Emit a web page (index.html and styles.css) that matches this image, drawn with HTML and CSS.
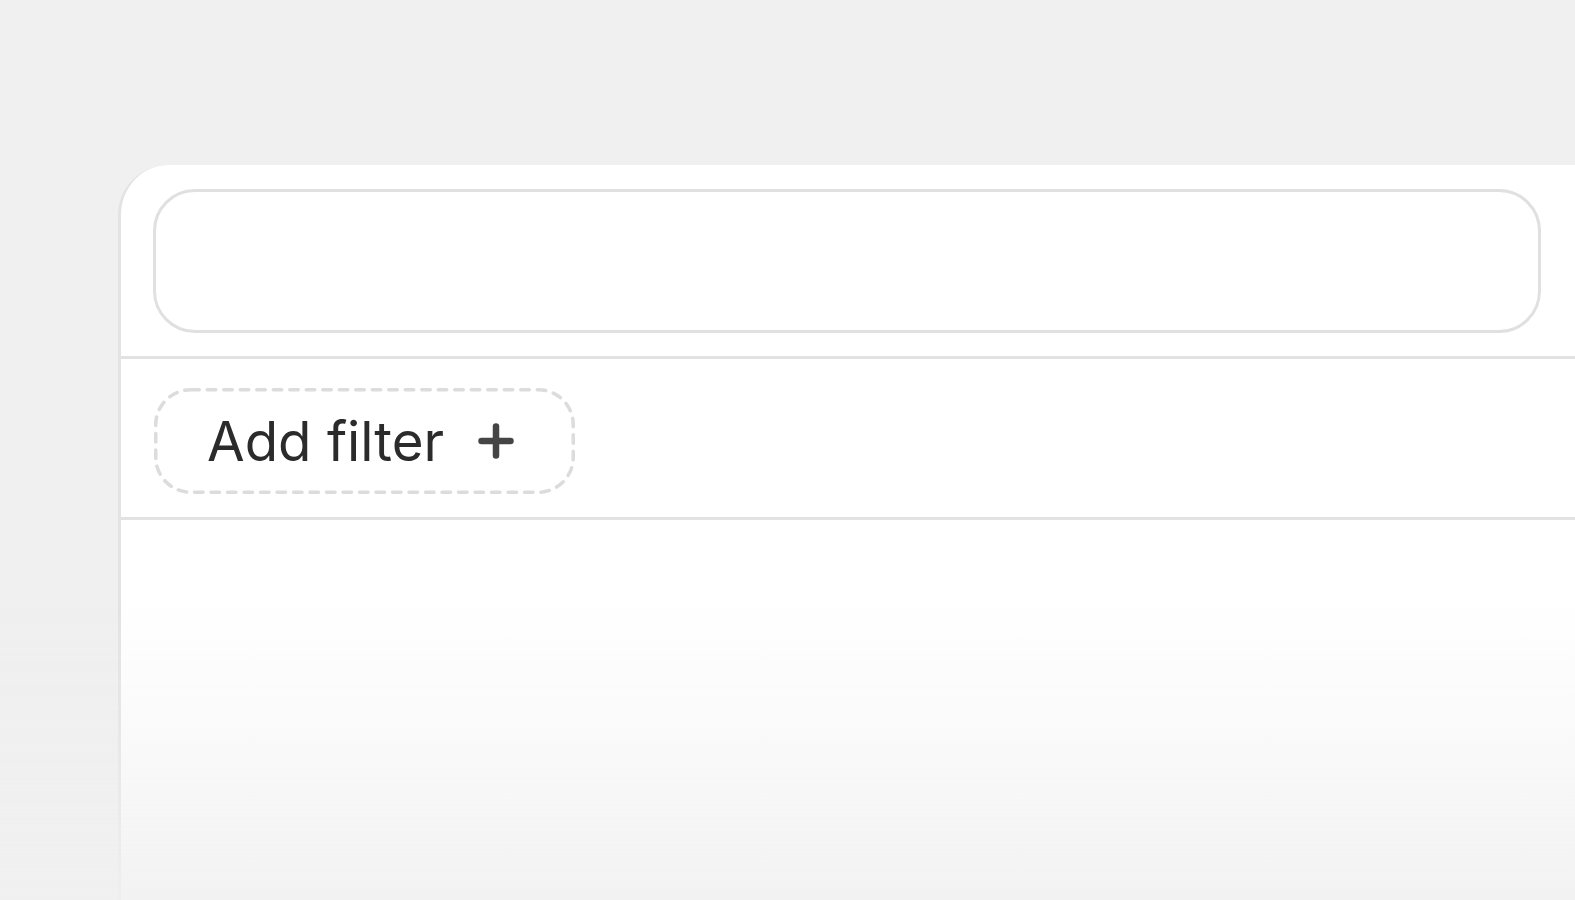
FILE: index.html
```html
<!DOCTYPE html>
<html lang="en">
<head>
<meta charset="utf-8">
<title>Filters</title>
<link rel="stylesheet" href="styles.css">
</head>
<body>
<div class="stage">
  <section class="panel">
    <div class="panel-header">
      <div class="search-box"></div>
    </div>
    <div class="filter-row">
      <button class="add-filter" type="button">
        <svg class="add-filter-outline" width="421" height="106" viewBox="0 0 421 106" aria-hidden="true">
          <rect x="1.75" y="1.75" width="417.5" height="102.5" rx="35" ry="35" fill="none" stroke="#dcdcdc" stroke-width="3.5" stroke-dasharray="8.5 8" stroke-linecap="round"/>
        </svg>
        <span class="add-filter-label">Add filter</span>
        <svg class="add-filter-icon" viewBox="0 0 48 48" width="48" height="48" aria-hidden="true">
          <path d="M24 9.5v29M9.5 24h29" fill="none" stroke="#454545" stroke-width="6.5" stroke-linecap="round"/>
        </svg>
      </button>
    </div>
    <div class="panel-body"></div>
  </section>
</div>
<div class="fade"></div>
</body>
</html>
```

FILE: styles.css
```css
html, body {
  margin: 0;
  padding: 0;
  height: 100%;
  overflow: hidden;
  background: #f0f0f0;
  font-family: Inter, "Noto Sans", "Liberation Sans", sans-serif;
}

.stage {
  padding: 165px 0 0 118px;
}

.panel {
  width: 1500px;
  min-height: 800px;
  background: #ffffff;
  border-left: 3px solid #e3e3e3;
  border-top-left-radius: 50px;
  display: flex;
  flex-direction: column;
}

.panel-header {
  padding: 24px 80px 23px 32px;
  border-bottom: 3px solid #e2e2e2;
}

.search-box {
  height: 138px;
  border: 3px solid #e0e0e0;
  border-radius: 42px;
  background: #ffffff;
}

.filter-row {
  padding: 29px 32px 23px 33px;
  border-bottom: 3px solid #e2e2e2;
  display: flex;
}

.add-filter {
  position: relative;
  display: flex;
  align-items: center;
  gap: 28px;
  width: 421px;
  height: 106px;
  box-sizing: border-box;
  padding: 0 0 0 53px;
  border: 0;
  border-radius: 36px;
  background: #ffffff;
  font-family: inherit;
  cursor: pointer;
}

.add-filter-outline {
  position: absolute;
  left: 0;
  top: 0;
  pointer-events: none;
}

.add-filter-label {
  font-size: 54.6px;
  font-weight: 400;
  color: #2b2b2b;
  line-height: 1;
}

.add-filter-icon {
  display: block;
  flex: none;
}

.panel-body {
  flex: 1;
}

.fade {
  position: fixed;
  left: 0;
  right: 0;
  bottom: 0;
  height: 300px;
  background: linear-gradient(to bottom, rgba(240, 240, 240, 0) 0%, rgba(240, 240, 240, 0.35) 45%, rgba(240, 240, 240, 0.85) 100%);
  pointer-events: none;
}
```
